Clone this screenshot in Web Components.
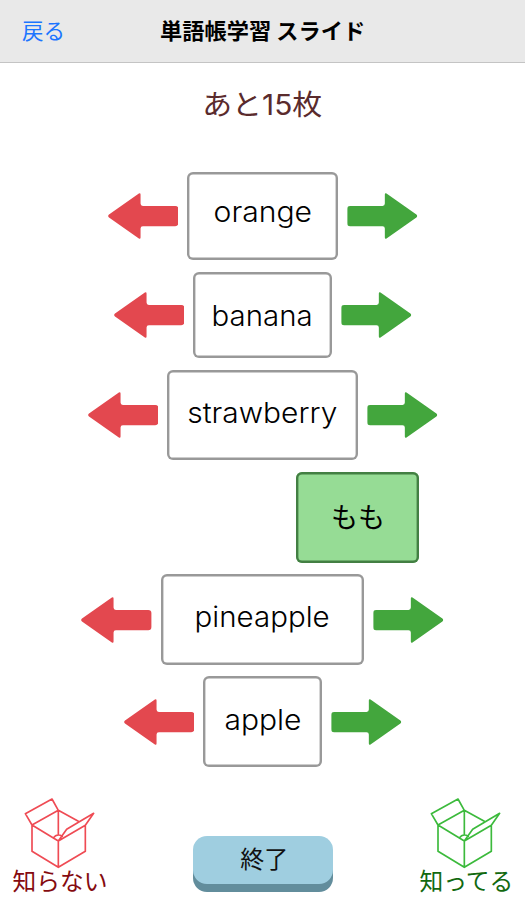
<!DOCTYPE html>
<html lang="ja">
<head>
<meta charset="utf-8">
<title>単語帳学習 スライド</title>
<style>
html,body{margin:0;background:#fff}
body{font-family:"Inter","Noto Sans CJK JP",sans-serif;color:#000}
</style>
</head>
<body>
<study-app></study-app>
<script>
// A one-line label: "base" is the baseline's distance from the container top,
// "fit" is the advance width the line is stretched to.
class FitLabel extends HTMLElement{
  connectedCallback(){
    const size=+this.getAttribute('size'), base=+this.getAttribute('base'), fit=+this.getAttribute('fit');
    const root=this.attachShadow({mode:'open'});
    root.innerHTML=`<style>:host{display:block;line-height:40px;height:40px;white-space:nowrap;font-size:${size}px;margin-top:${base-20-.3635*size}px}
      span{display:inline-block}</style><span></span>`;
    const s=root.querySelector('span'), t=this.getAttribute('text');
    s.textContent=t;
    if(fit) s.style.transform=`scaleX(${fit/s.getBoundingClientRect().width})`;
  }
}
customElements.define('fit-label',FitLabel);

class SlideArrow extends HTMLElement{
  connectedCallback(){
    const right=this.getAttribute('to')==='right';
    this.attachShadow({mode:'open'}).innerHTML=`<style>:host{display:block;flex:none;width:70.4px;height:46px}svg{display:block;${right?'transform:scaleX(-1)':''}}</style>
    <svg width="70.4" height="46" viewBox="0 0 70.7 46" preserveAspectRatio="none"><path fill="${right?'#43a63d':'#e3484f'}" d="M1 21.5 31 .4Q32.7-.3 32.7 1.6V10.5Q32.7 12.9 35 12.9H67.5Q70.7 12.9 70.7 16V30Q70.7 33.2 67.5 33.2H35Q32.7 33.2 32.7 35.5V44.4Q32.7 46.3 31 45.6L1 24.5Q-.7 23 1 21.5Z"/></svg>`;
  }
}
customElements.define('slide-arrow',SlideArrow);

class WordCard extends HTMLElement{
  connectedCallback(){
    const a=n=>this.getAttribute(n), known=this.hasAttribute('known');
    this.attachShadow({mode:'open'}).innerHTML=`<style>
      :host{display:flex;justify-content:center;align-items:center;gap:8.8px;height:${a('h')}px;${known?'padding-left:190.4px':''}}
      .card{box-sizing:border-box;flex:none;width:${a('w')}px;height:100%;border-radius:6px;background:${known?'#96dc95':'#fff'};box-shadow:inset 0 0 0 2.4px ${known?'#437f43':'#999'};display:flex;justify-content:center;align-items:flex-start}
      fit-label{font-weight:${known?400:300}}
      </style>${known?'':'<slide-arrow to="left"></slide-arrow>'}
      <div class="card"><fit-label text="${a('word')}" size="28" base="${a('base')}" fit="${a('fit')}"></fit-label></div>
      ${known?'':'<slide-arrow to="right"></slide-arrow>'}`;
  }
}
customElements.define('word-card',WordCard);

class AnswerBox extends HTMLElement{
  connectedCallback(){
    this.attachShadow({mode:'open'}).innerHTML=`<style>
      :host{display:flex;flex-direction:column;align-items:center;width:96px;height:110px}
      svg{display:block;flex:none;width:73.33px;height:73.33px;margin-left:-3px}
      fit-label{color:${this.getAttribute('ink')}}</style>
      <svg viewBox="64 48 220 220" fill="none" stroke="${this.getAttribute('line')}" stroke-width="5" stroke-linejoin="round" stroke-linecap="round">
      <path d="M94 135 173 91 233 124M173 91V164M94 135V214L173 262 254 214V136L173 183ZM173 183V262M94 135 74 101 154 57 173 91M173 183 198 148 279 100 254 136M158 174Q164 165 173 165 179 165 185 169"/></svg>
      <fit-label text="${this.getAttribute('text')}" size="24" base="21.6" fit="${this.getAttribute('fit')}"></fit-label>`;
  }
}
customElements.define('answer-box',AnswerBox);

class NavBar extends HTMLElement{
  connectedCallback(){
    this.attachShadow({mode:'open'}).innerHTML=`<style>
      :host{display:grid;grid-template-columns:1fr auto 1fr;align-items:start;box-sizing:border-box;height:62.5px;background:#e9e9e9;border-bottom:1px solid #c4c4c4}
      .back{padding-left:22px;color:#1c75ff}.title{font-weight:700}</style>
      <fit-label class="back" text="戻る" size="21.5" base="38.8"></fit-label>
      <fit-label class="title" text="単語帳学習 スライド" size="22" base="39" fit="205"></fit-label><span></span>`;
  }
}
customElements.define('nav-bar',NavBar);

class EndButton extends HTMLElement{
  connectedCallback(){
    this.attachShadow({mode:'open'}).innerHTML=`<style>
      :host{display:block}
      button{all:unset;box-sizing:border-box;display:flex;justify-content:center;align-items:flex-start;width:140.4px;height:48px;border-radius:14px;background:#9fcee0;box-shadow:0 8px 0 #628d9c;color:#111}
      fit-label{padding-left:2px}</style>
      <button><fit-label text="終了" size="24" base="33"></fit-label></button>`;
  }
}
customElements.define('end-button',EndButton);

class StudyApp extends HTMLElement{
  connectedCallback(){
    this.attachShadow({mode:'open'}).innerHTML=`<style>
      :host{display:flex;flex-direction:column;width:525px;height:906px;overflow:hidden;background:#fff}
      nav-bar{flex:none}
      .count{display:flex;justify-content:center;height:109.8px;flex:none;color:#5a2b2d}
      .cards{display:flex;flex-direction:column;gap:11.6px}
      .cards>*{flex:none}
      footer{display:flex;justify-content:space-between;align-items:flex-start;margin-top:auto;height:110px;padding:0 10.5px 0 12px}
      end-button{margin-top:40px}
      </style>
      <nav-bar></nav-bar>
      <div class="count"><fit-label text="あと15枚" size="28" base="53" fit="120"></fit-label></div>
      <div class="cards">
        <word-card word="orange" w="150.6" h="87.8" base="50" fit="98.5"></word-card>
        <word-card word="banana" w="139.4" h="86.6" base="54" fit="101"></word-card>
        <word-card word="strawberry" w="191.4" h="90.6" base="53" fit="150"></word-card>
        <word-card word="もも" known w="123" h="90.6" base="56.5" fit="54"></word-card>
        <word-card word="pineapple" w="203.8" h="90.6" base="53.4" fit="135"></word-card>
        <word-card word="apple" w="118.6" h="90.6" base="53.4" fit="77"></word-card>
      </div>
      <footer>
        <answer-box text="知らない" line="#ef4b54" ink="#850b10" fit="95"></answer-box>
        <end-button></end-button>
        <answer-box text="知ってる" line="#3cba3c" ink="#12690f" fit="94"></answer-box>
      </footer>`;
  }
}
customElements.define('study-app',StudyApp);
</script>
</body>
</html>
